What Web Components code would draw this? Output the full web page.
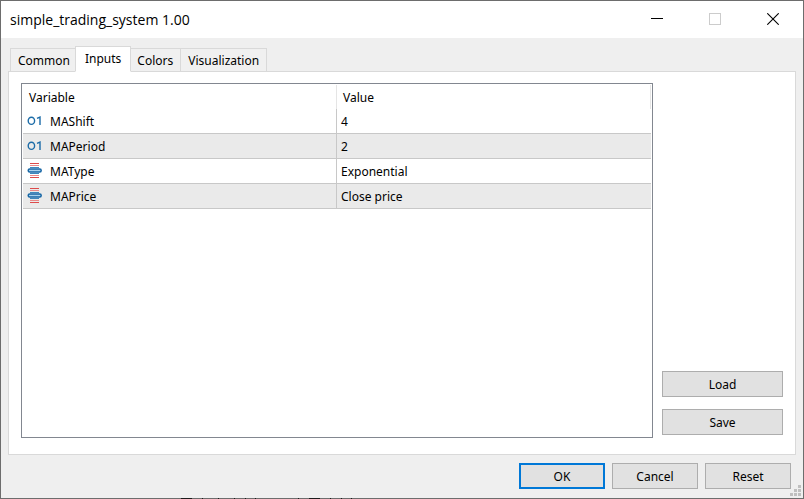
<!DOCTYPE html>
<html lang="en">
<head>
<meta charset="utf-8">
<title>simple_trading_system 1.00</title>
<style>
  html, body { height: 100%; margin: 0; }
  body { font: 12px/16px "Noto Sans", "Open Sans", sans-serif; color: #000; }
</style>
</head>
<body>
<dialog-window heading="simple_trading_system 1.00">
  <tab-strip slot="tabs">
    <tab-item>Common</tab-item>
    <tab-item selected>Inputs</tab-item>
    <tab-item>Colors</tab-item>
    <tab-item>Visualization</tab-item>
  </tab-strip>
  <inputs-table></inputs-table>
  <push-button slot="side">Load</push-button>
  <push-button slot="side">Save</push-button>
  <push-button slot="actions" primary>OK</push-button>
  <push-button slot="actions">Cancel</push-button>
  <push-button slot="actions">Reset</push-button>
</dialog-window>

<script>
const shadow = (el, html) => { el.attachShadow({ mode: "open" }).innerHTML = html; };

class DialogWindow extends HTMLElement {
  connectedCallback() {
    shadow(this, `
      <style>
        :host { display: flex; flex-direction: column; position: relative; box-sizing: border-box; height: 100vh; min-height: 320px; border: 1px solid #6d6d6d; background: #efefef; }
        header { display: flex; align-items: stretch; height: 37px; padding-right: 1px; background: #fff; flex: none; }
        h1 { flex: 1; margin: 0; padding-left: 9px; font: 14px/37px "Open Sans", "Noto Sans", sans-serif; }
        header button { width: 58px; margin: 0; padding: 0 1px 2px 0; border: 0; background: none; display: grid; place-items: center; }
        svg { display: block; }
        main { flex: 1; min-height: 0; display: flex; flex-direction: column; padding: 8px 7px 0; }
        .panel { flex: 1; min-height: 0; display: flex; gap: 9px; border: 1px solid #d9d9d9; background: #fff; padding: 11px 12px 16px; }
        .content { flex: 1; display: flex; }
        .side { width: 121px; display: flex; flex-direction: column; justify-content: flex-end; gap: 12px; padding-bottom: 3px; }
        footer { flex: none; display: flex; justify-content: flex-end; gap: 7px; padding: 8px 12px 9px; }
        footer ::slotted(*) { width: 86px; }
        .grip { position: absolute; right: 2px; bottom: 2px; }
        .behind { position: absolute; left: 180px; bottom: -1px; }
      </style>
      <header>
        <h1></h1>
        <button aria-label="Minimize"><svg width="12" height="12" shape-rendering="crispEdges"><path d="M0 5.5h12" stroke="#000"/></svg></button>
        <button aria-label="Maximize" disabled><svg width="12" height="12" fill="none" shape-rendering="crispEdges"><path d="M.5.5h11v11H.5z" stroke="#ccc"/></svg></button>
        <button aria-label="Close"><svg width="12" height="12"><path d="M.3.3l11.4 11.4M11.7.3L.3 11.7" stroke="#000" stroke-width="1.1"/></svg></button>
      </header>
      <main>
        <slot name="tabs"></slot>
        <section class="panel" role="tabpanel" aria-label="Inputs">
          <div class="content"><slot></slot></div>
          <div class="side"><slot name="side"></slot></div>
        </section>
      </main>
      <footer><slot name="actions"></slot></footer>
      <svg class="grip" width="11" height="11" fill="#bfbfbf" aria-hidden="true"><path d="M8 0h3v3H8zM4 4h3v3H4zM8 4h3v3H8zM0 8h3v3H0zM4 8h3v3H4zM8 8h3v3H8z"/></svg>
      <svg class="behind" width="172" height="1" aria-hidden="true"><path d="M0 .5h11m10 0h1m15 0h1m15 0h1m10 0h1m9 0h1m42 0h1m10 0h11m10 0h1m10 0h1m9 0h1" stroke="#1c1c1c"/></svg>`);
    this.shadowRoot.querySelector("h1").textContent = this.getAttribute("heading");
  }
}

class TabStrip extends HTMLElement {
  connectedCallback() {
    this.setAttribute("role", "tablist");
    shadow(this, `
      <style>:host { display: flex; align-items: flex-end; padding-left: 2px; margin-bottom: -1px; position: relative; }</style>
      <slot></slot>`);
  }
}

class TabItem extends HTMLElement {
  connectedCallback() {
    const on = this.hasAttribute("selected");
    shadow(this, `
      <style>
        :host { display: block; margin-left: -1px; }
        :host(:first-child) { margin-left: 0; }
        :host([selected]) { z-index: 1; margin: 0 -1px 0 -3px; }
        button { display: block; height: 24px; padding: 1px 7px 0; border: 1px solid #d9d9d9; background: #f0f0f0; font: inherit; line-height: 22px; color: inherit; white-space: nowrap; }
        :host([selected]) button { height: 26px; padding: 0 9px; border-bottom-color: #fff; background: #fff; }
      </style>
      <button role="tab" aria-selected="${on}"><slot></slot></button>`);
  }
}

class PushButton extends HTMLElement {
  connectedCallback() {
    shadow(this, `
      <style>
        :host { display: block; }
        button { display: block; box-sizing: border-box; width: 100%; height: 26px; padding: 2px 0 0; border: 1px solid #adadad; background: #e1e1e1; font: inherit; color: inherit; }
        :host([primary]) button { border: 2px solid #0078d7; }
      </style>
      <button><slot></slot></button>`);
  }
}

class TypeIcon extends HTMLElement {
  connectedCallback() {
    const art = this.getAttribute("kind") === "number"
      ? `<g fill="none" stroke="#1c6ca8" stroke-width="1.4"><ellipse cx="4.4" cy="7.8" rx="3.2" ry="3.6"/><path d="M10 5.4l3-1.3V12"/></g>`
      : `<path d="M3 .5h9M3 14.5h9" stroke="#dd4b4b"/><path d="M3 2.5h9M3 12.5h9" stroke="#e88a8a"/><path d="M3 4.5h9M3 10.5h9" stroke="#3f88bd"/><rect x="1.2" y="6" width="13" height="3" rx="1.5" fill="#a9d3ee" stroke="#1766a5" stroke-width="1.5"/>`;
    shadow(this, `<style>:host { display: block; } svg { display: block; }</style>
      <svg width="16" height="16" viewBox="0 1 16 16" overflow="visible" aria-hidden="true">${art}</svg>`);
  }
}

class InputsTable extends HTMLElement {
  connectedCallback() {
    const rows = [["number", "MAShift", "4"], ["number", "MAPeriod", "2"], ["list", "MAType", "Exponential"], ["list", "MAPrice", "Close price"]];
    shadow(this, `
      <style>
        :host { display: block; flex: 1; border: 1px solid #828790; background: #fff; padding: 1px; }
        table { width: 100%; table-layout: fixed; border-collapse: separate; border-spacing: 0; }
        th, td { box-sizing: border-box; padding: 2px 4px 0; text-align: left; font-weight: normal; border-right: 1px solid #c8c8c8; }
        th { height: 24px; padding: 2px 6px 0; border-color: #e5e5e5; }
        td { height: 25px; border-bottom: 1px solid #c8c8c8; }
        td:last-child { border-right: 0; }
        tbody tr:nth-child(even) { background: #eaeaea; }
        .name { display: flex; align-items: center; gap: 7px; }
      </style>
      <table>
        <thead><tr><th scope="col">Variable</th><th scope="col">Value</th></tr></thead>
        <tbody>${rows.map(([k, n, v]) => `<tr><td><div class="name"><type-icon kind="${k}"></type-icon>${n}</div></td><td>${v}</td></tr>`).join("")}</tbody>
      </table>`);
  }
}

customElements.define("type-icon", TypeIcon);
customElements.define("push-button", PushButton);
customElements.define("tab-item", TabItem);
customElements.define("tab-strip", TabStrip);
customElements.define("inputs-table", InputsTable);
customElements.define("dialog-window", DialogWindow);
</script>
</body>
</html>
